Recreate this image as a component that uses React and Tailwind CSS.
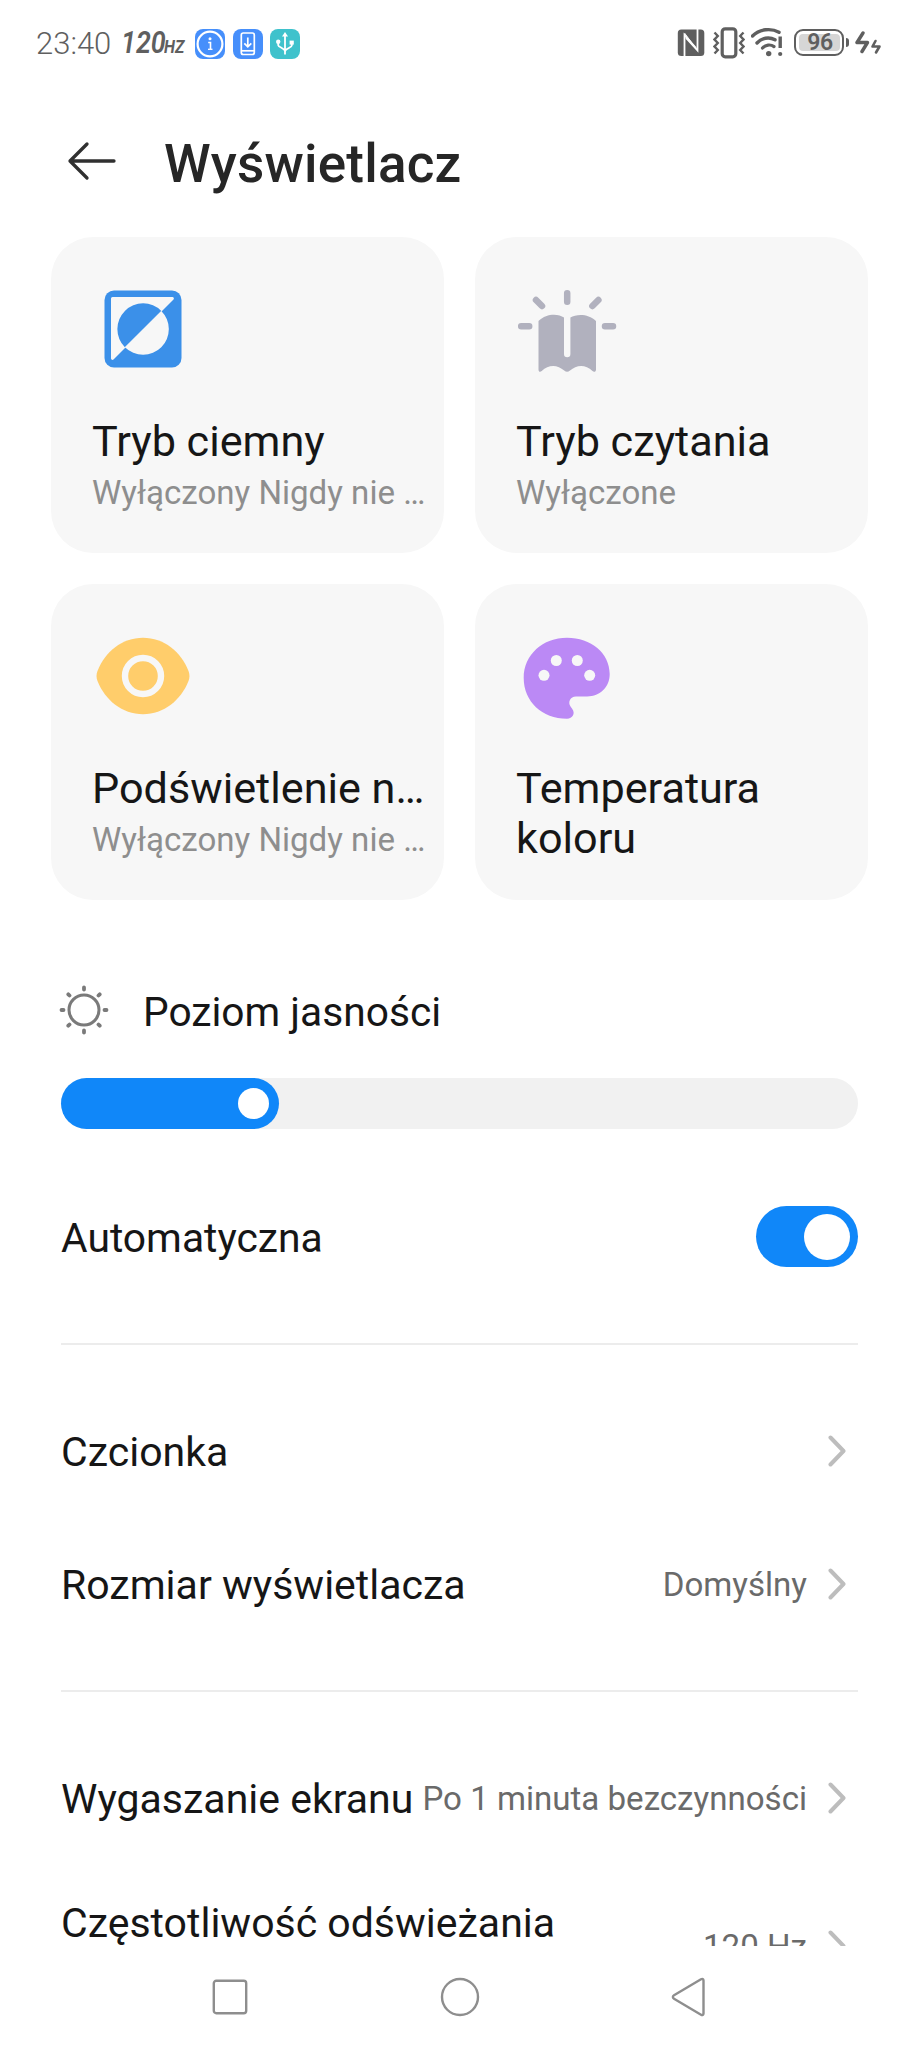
import clsx from "clsx";

function StatusBar() {
  return (
    <div className="flex h-[90px] shrink-0 items-start justify-between pl-9 pr-[37px] pt-[27px] text-[#5f5f5f]">
      <div className="flex h-[34px] items-center">
        <span className="text-[31px] font-light leading-[34px]">23:40</span>
        <span className="ml-[10px] flex w-[62px] items-baseline whitespace-nowrap font-semibold italic leading-[34px]">
          <span className="inline-block origin-left scale-x-[0.84] text-[32px]">120</span>
          <span className="-ml-[10px] inline-block origin-left scale-x-[0.84] text-[19px] font-bold">HZ</span>
        </span>
        <div className="ml-[12px] flex gap-[7.5px]">
          <svg width="30" height="30" viewBox="0 0 30 30" fill="none">
            <rect width="30" height="30" rx="8" fill="#468ffb" />
            <circle cx="15" cy="15" r="12.4" stroke="white" strokeWidth="2.2" />
            <circle cx="15" cy="9.800" r="1.500" fill="white" />
            <path d="M13.200 13.500h2.300v6.500" stroke="white" strokeWidth="1.600" />
            <path d="M13 20.300h4.500" stroke="white" strokeWidth="1.300" />
          </svg>
          <svg width="30" height="30" viewBox="0 0 30 30" fill="none" stroke="white" strokeWidth="1.7">
            <rect width="30" height="30" rx="8" fill="#468ffb" stroke="none" />
            <rect x="8.3" y="4" width="13" height="21.5" rx="2" />
            <path d="M8.3 21.8h13" />
            <path d="M14.8 8.5v9M11.3 14.4l3.5 3.5 3.5-3.5" />
          </svg>
          <svg width="30" height="30" viewBox="0 0 30 30" fill="none" stroke="white" strokeWidth="1.8">
            <rect width="30" height="30" rx="8" fill="#3fc2cc" stroke="none" />
            <path d="M15 6v19.5M8.2 13v3.2c0 2 6.8 3 6.8 6.3M21.800 14v2.600c0 2-6.800 3-6.800 5.900" />
            <path d="M15 3l3 4.500h-6z" fill="white" stroke="none" />
            <circle cx="8.200" cy="12.800" r="2.200" fill="white" stroke="none" />
            <path d="M19.600 11.600h4.200v4h-4.200z" fill="white" stroke="none" />
          </svg>
        </div>
      </div>

      <div className="flex h-[32px] items-center">
        <svg width="28" height="28" viewBox="0 0 28 28" fill="none">
          <rect x="0.800" y="0.500" width="26.500" height="26.500" rx="3.500" fill="#5f5f5f" />
          <path d="M7.500 27.500V6L19 19" stroke="white" strokeWidth="1.800" />
          <path d="M20.500 0v21.500L9 9" stroke="white" strokeWidth="1.800" />
          <path d="M7.500 4l13 17.500" stroke="white" strokeWidth="1" />
        </svg>
        <svg className="ml-[8px]" width="32" height="32" viewBox="0 0 32 32" fill="none" stroke="#5f5f5f">
          <rect x="9.200" y="1.800" width="13.600" height="28" rx="3" strokeWidth="3.200" />
          <path d="M1.500 5.500l3.300 3.500-3.300 3.500 3.300 3.500-3.300 3.500 3.300 3.500-3.300 3.500" strokeWidth="2.400" />
          <path d="M30.500 5.500l-3.300 3.500 3.300 3.500-3.300 3.500 3.300 3.500-3.300 3.500 3.300 3.500" strokeWidth="2.400" />
        </svg>
        <svg className="ml-[6px]" width="33" height="32" viewBox="0 0 33 32" fill="none" stroke="#5f5f5f" strokeLinecap="round">
          <path d="M1.500 9c7-7 18.500-8.300 26.500-3.700" strokeWidth="3.400" />
          <path d="M6 16c4.500-5 12-6.600 18-3.200" strokeWidth="3.400" />
          <path d="M11.500 21c3-3.300 8-4 11.500-1.400" strokeWidth="3.200" />
          <circle cx="17.700" cy="26.600" r="2.700" fill="#5f5f5f" stroke="none" />
          <path d="M29.200 9.500v11.500" strokeWidth="3.400" strokeLinecap="butt" />
          <circle cx="29.200" cy="27" r="2.100" fill="#5f5f5f" stroke="none" />
        </svg>
        <div className="ml-[10px] flex items-center pb-[2px]">
          <div className="flex h-[27px] w-[50px] items-center rounded-[9px] border-[2.5px] border-[#5f5f5f] p-[2.5px]">
            <div className="flex h-[17px] w-full items-center justify-center rounded-[4px] bg-[#d6d6d6] pl-[2px] text-[23px] font-semibold leading-none tracking-[-0.5px]">
              96
            </div>
          </div>
          <div className="ml-[2px] h-[9px] w-[3px] rounded-r bg-[#5f5f5f]" />
        </div>
        <svg className="ml-[6px]" width="27" height="24" viewBox="0 0 27 24" fill="none" stroke="#5f5f5f" strokeWidth="3.400" strokeLinejoin="round" strokeLinecap="round">
          <path d="M8 2L2 11.500h10.500L7 20.500" />
          <path d="M20.500 10l-3 5.500h7l-3.500 6" strokeWidth="2.600" />
        </svg>
      </div>
    </div>
  );
}

function DarkModeIcon() {
  return (
    <svg width="78" height="78" viewBox="0 0 78 78">
      <rect x="0.500" y="0.500" width="77" height="77" rx="9.500" fill="#3b90e9" />
      <path d="M8.500 7h60a1.500 1.500 0 0 1 1 2.500L9.500 69.500A1.500 1.500 0 0 1 7 68.500V8.500A1.500 1.500 0 0 1 8.500 7z" fill="#f7f7f7" />
      <path d="M57.300 20.900A25 25 0 0 0 20.900 57.300z" fill="#3b90e9" />
      <path d="M57.300 20.900A25 25 0 0 1 20.900 57.300z" fill="#f7f7f7" />
    </svg>
  );
}

function ReadingIcon() {
  return (
    <svg width="100" height="84" viewBox="0 0 100 84" fill="#b1b1be">
      <path d="M21.500 32c8-8 20-7.500 25.500-3.500v36.500a3.200 3.200 0 0 0 6.400 0V28.500C59 25 71 24 79 32v48.500c0 2.300-2 3-3.500 1.500-7-7-16-6.500-22.500-.5-2 1.800-3.800 1.800-5.800 0-6.500-6-15.500-6.500-22.500.5-1.500 1.500-3.200.8-3.200-1.500z" />
      <g stroke="#b1b1be" strokeWidth="6.500" strokeLinecap="round">
        <path d="M50.200 4.200v8.500M19 11l6 6M81.400 11l-6 6M4.200 37.300h8M88 37.300h8" />
      </g>
    </svg>
  );
}

function EyeIcon() {
  return (
    <svg width="94" height="78" viewBox="0 0 94 78">
      <path d="M1.500 34C9 15 26 .8 47 .8S85 15 92.500 34c1.300 3.400 1.300 6.600 0 10C85 63 68 77.200 47 77.200S9 63 1.500 44c-1.300-3.400-1.300-6.600 0-10z" fill="#ffcd6b" />
      <circle cx="47" cy="39" r="18" fill="none" stroke="#f7f7f7" strokeWidth="6.400" />
    </svg>
  );
}

function PaletteIcon() {
  return (
    <svg width="88" height="82" viewBox="0 0 88 82">
      <path d="M44 .7C68 .7 86.700 16 86.700 37c0 13-9.500 22.400-22.500 22.400H53c-5.800 0-8.500 5.800-5.300 10.300l1.600 2.300c3.300 4.600.2 9.700-5.300 9.700C19 81.700.7 64.500.7 41S20 .7 44 .7z" fill="#bb89f5" />
      <g fill="#f7f7f7">
        <circle cx="21" cy="38.300" r="5.500" />
        <circle cx="33.300" cy="23.500" r="5.500" />
        <circle cx="54.300" cy="23.500" r="5.500" />
        <circle cx="66.700" cy="38.300" r="5.500" />
      </g>
    </svg>
  );
}

const cards = [
  { icon: <DarkModeIcon />, iconClass: "pl-[12px] pt-[53px]", title: "Tryb ciemny", subtitle: "Wyłączony Nigdy nie …" },
  { icon: <ReadingIcon />, iconClass: "pl-[1px] pt-[52px]", title: "Tryb czytania", subtitle: "Wyłączone" },
  { icon: <EyeIcon />, iconClass: "pl-[4px] pt-[53px]", title: "Podświetlenie n…", subtitle: "Wyłączony Nigdy nie …" },
  { icon: <PaletteIcon />, iconClass: "pl-[7px] pt-[53px]", title: "Temperatura koloru", wrap: true },
];

function Card({ icon, iconClass, title, subtitle, wrap }) {
  return (
    <article className="h-[316px] rounded-[42px] bg-[#f7f7f7] pl-[41px]">
      <div className={clsx("h-[180px]", iconClass)}>{icon}</div>
      <h2 className={clsx("text-[43.2px] leading-[50px] text-[#161616]", wrap ? "w-[260px]" : "whitespace-nowrap")}>{title}</h2>
      {subtitle ? <p className="mt-[4px] whitespace-nowrap text-[33.1px] leading-[44px] text-[#8e8e8e]">{subtitle}</p> : null}
    </article>
  );
}

function Chevron() {
  return (
    <svg className="ml-[21px] mr-[10px] shrink-0" width="20" height="34" viewBox="0 0 20 34" fill="none" stroke="#bdbdbd" strokeWidth="4" strokeLinecap="round" strokeLinejoin="round">
      <path d="M2.500 3.500L15.500 17 2.500 30.500" />
    </svg>
  );
}

function SettingRow({ label, value, tall }) {
  return (
    <div className={clsx("flex shrink-0 items-center whitespace-nowrap", tall ? "h-[163px]" : "h-[133px]")}>
      <span className={clsx("flex-1 text-[41px] leading-[48px] text-[#161616]", tall ? "h-[94px]" : "pt-[3px]")}>{label}</span>
      {value ? <span className="pt-[3px] text-[33.1px] text-[#6a6a6a]">{value}</span> : null}
      <Chevron />
    </div>
  );
}

function Divider() {
  return <div className="mb-[39px] mt-[40px] h-[2px] shrink-0 bg-[#ececec]" />;
}

function NavBar() {
  return (
    <nav className="flex h-[102px] shrink-0 items-start justify-center gap-[190px] bg-white pt-[31px]">
      <svg width="40" height="40" viewBox="0 0 40 40" fill="none" stroke="#8e8e8e" strokeWidth="2.400">
        <rect x="3.800" y="3.800" width="32.400" height="32.400" rx="2.500" />
      </svg>
      <svg width="40" height="40" viewBox="0 0 40 40" fill="none" stroke="#8e8e8e" strokeWidth="2.400">
        <circle cx="20" cy="20" r="18" />
      </svg>
      <svg width="40" height="40" viewBox="0 0 40 40" fill="none" stroke="#8e8e8e" strokeWidth="2.400" strokeLinejoin="round">
        <path d="M4 18.300L31 2.300c1.500-.8 2.500-.2 2.500 1.300v32.800c0 1.500-1 2.100-2.500 1.300L4 21.700c-1.500-.9-1.500-2.500 0-3.400z" />
      </svg>
    </nav>
  );
}

export default function App() {
  return (
    <div className="flex h-[2048px] w-[919px] flex-col overflow-hidden bg-white font-['Roboto',sans-serif]">
      <StatusBar />

      <header className="flex h-[147px] shrink-0 items-center pb-[6px] pl-[67px]">
        <svg width="50" height="40" viewBox="0 0 50 40" fill="none" stroke="#303030" strokeWidth="3.300" strokeLinecap="round" strokeLinejoin="round">
          <path d="M47 20H3M20 3L3 20l17 17" />
        </svg>
        <h1 className="ml-[47px] pt-[6px] text-[53px] font-medium leading-[60px] tracking-[0.2px] text-[#262626]">Wyświetlacz</h1>
      </header>

      <main className="flex min-h-0 flex-1 flex-col overflow-hidden">
        <section className="grid shrink-0 grid-cols-2 gap-[31px] px-[51px]">
          {cards.map((card) => (
            <Card key={card.title} {...card} />
          ))}
        </section>

        <section className="flex shrink-0 flex-col px-[61px]">
          <div className="-ml-[2px] mt-[80px] flex h-[60px] items-center">
            <svg width="50" height="50" viewBox="0 0 50 50" fill="none" stroke="#7a7a7a" strokeLinecap="round">
              <circle cx="25" cy="25" r="15" strokeWidth="3" />
              <path d="M25 2.500v2M25 45.500v2M2.500 25h2M45.500 25h2M9.300 9.300l1.200 1.200M39.500 39.500l1.200 1.200M9.300 40.700l1.200-1.200M39.500 10.500l1.200-1.200" strokeWidth="3.800" />
            </svg>
            <span className="ml-[34px] pt-[3px] text-[40.7px] leading-[48px] text-[#161616]">Poziom jasności</span>
          </div>

          <div className="mt-[38px] h-[51px] rounded-full bg-[#f1f1f1]">
            <div className="flex h-full w-[218px] items-center justify-end rounded-full bg-[#1087f9] pr-[10px]">
              <div className="size-[31px] rounded-full bg-white" />
            </div>
          </div>

          <div className="mt-[41px] flex h-[133px] items-center justify-between">
            <span className="pt-[3px] text-[40.8px] leading-[48px] text-[#161616]">Automatyczna</span>
            <div className="flex h-[61px] w-[102px] items-center justify-end rounded-full bg-[#1087f9] pr-[8px]">
              <div className="size-[46px] rounded-full bg-white" />
            </div>
          </div>

          <Divider />
          <SettingRow label="Czcionka" />
          <SettingRow label="Rozmiar wyświetlacza" value="Domyślny" />
          <Divider />
          <SettingRow label="Wygaszanie ekranu" value="Po 1 minuta bezczynności" />
          <SettingRow label="Częstotliwość odświeżania" value="120 Hz" tall />
        </section>
      </main>

      <NavBar />
    </div>
  );
}
